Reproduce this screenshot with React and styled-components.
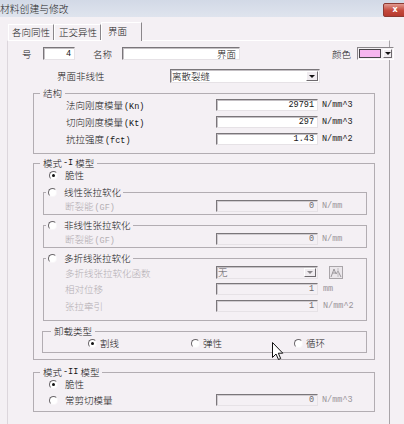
import React from 'react';
import styled, { createGlobalStyle } from 'styled-components';

const GlobalStyle = createGlobalStyle`
  html, body { margin: 0; padding: 0; background: #f4f0f4; }
  body {
    font-family: "Noto Sans CJK SC", "Noto Sans", sans-serif;
    font-size: 9.5px;
    color: #151515;
  }
  #root { width: 404px; height: 424px; overflow: hidden; }
`;

const CJK = `"Noto Sans CJK SC", "Noto Sans", sans-serif`;

const Window = styled.div`
  position: relative;
  width: 404px;
  height: 424px;
  overflow: hidden;
  background: #f4f0f4;
`;

const TitleBar = styled.div`
  height: 17px;
  display: flex;
  align-items: flex-start;
  background: linear-gradient(#d2d9e6, #dfe4ee);
`;

const Title = styled.span`
  font-family: ${CJK};
  font-weight: 300;
  font-size: 9.8px;
  line-height: 18px;
  color: #262626;
`;

const CloseBtn = styled.div`
  margin: 3px -3px 0 auto;
  width: 22px;
  height: 12px;
  border: 1px solid #8c3a33;
  border-radius: 2px;
  background: linear-gradient(#e19a90, #c4483b 55%, #b63a2f);
  color: #fff;
  font-family: "DejaVu Sans", sans-serif;
  font-weight: bold;
  font-size: 8px;
  line-height: 12px;
  text-align: center;
`;

const TabStrip = styled.div`
  height: 23px;
  display: flex;
  align-items: flex-end;
  padding-left: 8px;
`;

const Tab = styled.div`
  height: ${p => (p.active ? 19 : 16)}px;
  box-sizing: border-box;
  padding: ${p => p.pad};
  border-top: 1px solid #ffffff;
  border-left: 1px solid #ffffff;
  border-right: 1px solid #8a868a;
  font-family: ${CJK};
  font-weight: 300;
  font-size: 9.5px;
  line-height: ${p => (p.active ? 17 : 14)}px;
  color: #151515;
  white-space: nowrap;
  margin-bottom: ${p => (p.active ? -1 : 0)}px;
  background: #f4f0f4;
  position: relative;
`;

const Panel = styled.div`
  margin-left: 7px;
  width: 383px;
  height: 384px;
  box-sizing: border-box;
  border-top: 1px solid #ffffff;
  border-left: 1px solid #dcd6dc;
  border-right: 1px solid #a8a4a8;
  padding-top: 6px;
`;

const Row = styled.div`
  display: flex;
  align-items: center;
  height: ${p => p.h || 12}px;
  margin-top: ${p => p.mt || 0}px;
  padding-left: ${p => p.pl || 0}px;
`;

const Label = styled.span`
  flex: none;
  width: ${p => (p.w ? `${p.w}px` : 'auto')};
  margin-left: ${p => p.ml || 0}px;
  font-family: ${CJK};
  font-weight: 300;
  font-size: 9.5px;
  line-height: 12px;
  white-space: nowrap;
  color: ${p => (p.off ? '#b3aeb3' : '#151515')};
`;

const Lat = styled.span`
  font-family: "Liberation Mono", monospace;
  font-weight: normal;
  font-size: 8.5px;
  line-height: 1;
  margin-left: 1px;
`;

const Unit = styled.span`
  margin-left: ${p => p.ml || 4}px;
  font-family: "Liberation Mono", monospace;
  font-size: 8.5px;
  line-height: 12px;
  white-space: nowrap;
  color: ${p => (p.off ? '#9a959a' : '#222')};
`;

const TextBox = styled.div`
  flex: none;
  width: ${p => p.w}px;
  height: ${p => p.h || 12}px;
  margin-left: ${p => p.ml || 0}px;
  box-sizing: border-box;
  display: flex;
  align-items: center;
  justify-content: flex-end;
  padding: 0 3px;
  background: ${p => (p.off ? '#f4f0f4' : '#ffffff')};
  border: 1px solid;
  border-color: #7a767a #e6e2e6 #e6e2e6 #7a767a;
  box-shadow: inset 1px 1px 0 ${p => (p.off ? '#d0ccd0' : '#c4c0c4')};
  font-family: ${p => (p.cjk ? CJK : `"Liberation Mono", monospace`)};
  font-weight: ${p => (p.cjk ? 300 : 'normal')};
  font-size: ${p => (p.cjk ? 9.5 : 8.5)}px;
  line-height: 10px;
  color: ${p => (p.off ? '#6e6a6e' : '#151515')};
  white-space: nowrap;
`;

const Combo = styled.div`
  flex: none;
  width: ${p => p.w}px;
  height: ${p => p.h || 14}px;
  margin-left: ${p => p.ml || 0}px;
  box-sizing: border-box;
  display: flex;
  align-items: stretch;
  background: ${p => (p.off ? '#f4f0f4' : '#ffffff')};
  border: 1px solid;
  border-color: #7a767a #e6e2e6 #e6e2e6 #7a767a;
  box-shadow: inset 1px 1px 0 #c4c0c4;
`;

const ComboText = styled.span`
  flex: 1;
  padding-left: 1px;
  font-family: ${CJK};
  font-weight: 300;
  font-size: 9.5px;
  line-height: ${p => p.lh || 12}px;
  color: ${p => (p.off ? '#555055' : '#151515')};
  white-space: nowrap;
`;

const DropBtn = styled.span`
  flex: none;
  width: ${p => p.w || 12}px;
  box-sizing: border-box;
  margin: 1px 1px 1px 0;
  background: #f0ecf0;
  border: 1px solid;
  border-color: #ffffff #6e6a6e #6e6a6e #ffffff;
  display: flex;
  align-items: center;
  justify-content: center;
  &::after {
    content: '';
    border-left: 3px solid transparent;
    border-right: 3px solid transparent;
    border-top: 3px solid ${p => (p.off ? '#8a868a' : '#111')};
  }
`;

const ColorPick = styled.div`
  flex: none;
  width: 37px;
  height: 13px;
  box-sizing: border-box;
  margin-left: ${p => p.ml || 0}px;
  display: flex;
  border: 1px solid;
  border-color: #8a868a #ffffff #ffffff #8a868a;
  background: #f4f0f4;
`;

const Swatch = styled.span`
  flex: 1;
  margin: 1px 2px 1px 1px;
  background: ${p => p.color};
  border: 1px solid #4a464a;
`;

const Group = styled.fieldset`
  box-sizing: border-box;
  width: ${p => p.w}px;
  margin: ${p => p.mt || 0}px 0 0 ${p => p.ml || 0}px;
  padding: 0;
  border: 1px solid #b2adb2;
  min-inline-size: 0;
`;

const Legend = styled.legend`
  margin-left: ${p => p.ml || 6}px;
  padding: 0 ${p => p.pr || 3}px 0 ${p => p.pl || 3}px;
  line-height: 12px;
  height: 12px;
`;

const LegendInner = styled.span`
  display: inline-flex;
  align-items: center;
  height: 12px;
  font-family: ${CJK};
  font-weight: 300;
  font-size: 9.5px;
  line-height: 12px;
  color: #151515;
  white-space: nowrap;
`;

const GroupBody = styled.div`
  display: flex;
  flex-direction: column;
  gap: ${p => p.gap || 0}px;
  padding: ${p => p.pt || 0}px 0 ${p => p.pb || 0}px ${p => p.pl || 0}px;
`;

const Section = styled.div`
  padding-left: 25px;
`;

const Radio = styled.span`
  flex: none;
  position: relative;
  width: 9px;
  height: 9px;
  box-sizing: border-box;
  border-radius: 50%;
  border: 1px solid;
  border-color: #6a666a #f8f6f8 #f8f6f8 #6a666a;
  background: #ffffff;
  margin-right: ${p => p.gap || 7}px;
  &::after {
    content: '';
    display: ${p => (p.checked ? 'block' : 'none')};
    position: absolute;
    left: 2px;
    top: 2px;
    width: 3px;
    height: 3px;
    border-radius: 50%;
    background: #111;
  }
`;

const RadioItem = styled.span`
  flex: none;
  display: inline-flex;
  align-items: center;
  width: ${p => (p.w ? `${p.w}px` : 'auto')};
  font-family: ${CJK};
  font-weight: 300;
  font-size: 9.5px;
  line-height: 12px;
  white-space: nowrap;
`;

const UnloadRow = styled.div`
  display: grid;
  grid-template-columns: 103px 103px auto;
  height: 12px;
  align-items: center;
  padding-left: 45px;
`;

const IconBtn = styled.span`
  flex: none;
  margin-left: ${p => p.ml || 0}px;
  width: 14px;
  height: 13px;
  display: flex;
`;

const Cursor = styled.svg`
  position: absolute;
  left: 272px;
  top: 342px;
`;

function R({ checked, gap, w, children }) {
  return (
    <RadioItem w={w}>
      <Radio checked={checked} gap={gap} />
      {children}
    </RadioItem>
  );
}

export default function App() {
  return (
    <Window>
      <GlobalStyle />
      <TitleBar>
        <Title>材料创建与修改</Title>
        <CloseBtn>x</CloseBtn>
      </TitleBar>

      <TabStrip>
        <Tab pad="0 3px 0 3px">各向同性</Tab>
        <Tab pad="0 3px 0 4px">正交异性</Tab>
        <Tab active pad="0 14px 0 6px">界面</Tab>
      </TabStrip>

      <Panel>
        <Row h={13} pl={14}>
          <Label w={21}>号</Label>
          <TextBox w={32} h={13}>4</TextBox>
          <Label ml={18} w={29}>名称</Label>
          <TextBox w={118} h={13} cjk>界面</TextBox>
          <Label ml={92} w={25}>颜色</Label>
          <ColorPick>
            <Swatch color="#f6b6ef" />
            <DropBtn w={9} />
          </ColorPick>
        </Row>

        <Row h={14} mt={9} pl={49}>
          <Label w={113}>界面非线性</Label>
          <Combo w={150}>
            <ComboText>离散裂缝</ComboText>
            <DropBtn />
          </Combo>
        </Row>

        <Section>
          <Group w={342} mt={4}>
            <Legend ml={6}>
              <LegendInner>结构</LegendInner>
            </Legend>
            <GroupBody gap={5} pb={8} pl={32}>
              <Row>
                <Label w={150}>法向刚度模量<Lat>(Kn)</Lat></Label>
                <TextBox w={102}>29791</TextBox>
                <Unit>N/mm^3</Unit>
              </Row>
              <Row>
                <Label w={150}>切向刚度模量<Lat>(Kt)</Lat></Label>
                <TextBox w={102}>297</TextBox>
                <Unit>N/mm^3</Unit>
              </Row>
              <Row>
                <Label w={150}>抗拉强度<Lat>(fct)</Lat></Label>
                <TextBox w={102}>1.43</TextBox>
                <Unit>N/mm^2</Unit>
              </Row>
            </GroupBody>
          </Group>

          <Group w={342} mt={3}>
            <Legend ml={6}>
              <LegendInner>模式<Lat>-I</Lat>&nbsp;模型</LegendInner>
            </Legend>
            <GroupBody pb={6}>
              <Row pl={15}>
                <R checked>脆性</R>
              </Row>

              <Group w={324} mt={5} ml={9}>
                <Legend ml={2} pl={2} pr={2}>
                  <LegendInner>
                    <Radio />
                    线性张拉软化
                  </LegendInner>
                </Legend>
                <GroupBody pt={2} pb={2} pl={21}>
                  <Row>
                    <Label w={151} off>断裂能<Lat>(GF)</Lat></Label>
                    <TextBox w={102} off>0</TextBox>
                    <Unit off>N/mm</Unit>
                  </Row>
                </GroupBody>
              </Group>

              <Group w={324} mt={4} ml={9}>
                <Legend ml={2} pl={2} pr={2}>
                  <LegendInner>
                    <Radio />
                    非线性张拉软化
                  </LegendInner>
                </Legend>
                <GroupBody pt={2} pb={2} pl={21}>
                  <Row>
                    <Label w={151} off>断裂能<Lat>(GF)</Lat></Label>
                    <TextBox w={102} off>0</TextBox>
                    <Unit off>N/mm</Unit>
                  </Row>
                </GroupBody>
              </Group>

              <Group w={324} mt={4} ml={9}>
                <Legend ml={2} pl={2} pr={2}>
                  <LegendInner>
                    <Radio />
                    多折线张拉软化
                  </LegendInner>
                </Legend>
                <GroupBody pt={2} pb={8} pl={21} gap={4}>
                  <Row h={13}>
                    <Label w={151} off>多折线张拉软化函数</Label>
                    <Combo w={102} h={13} off>
                      <ComboText off lh={11}>无</ComboText>
                      <DropBtn off />
                    </Combo>
                    <IconBtn ml={11}>
                      <svg width="14" height="13" viewBox="0 0 14 13">
                        <rect x="0.5" y="0.5" width="13" height="12" fill="#ebe7eb" stroke="#a9a5a9" />
                        <path d="M2 11 L5 3 L7 8 L9 5 L12 11" fill="none" stroke="#9a969a" strokeWidth="1" />
                        <path d="M3.5 7 H6" stroke="#9a969a" strokeWidth="1" />
                        <path d="M9 2 V11" stroke="#c0bcc0" strokeWidth="1" />
                      </svg>
                    </IconBtn>
                  </Row>
                  <Row>
                    <Label w={151} off>相对位移</Label>
                    <TextBox w={102} off>1</TextBox>
                    <Unit off ml={5}>mm</Unit>
                  </Row>
                  <Row mt={1}>
                    <Label w={151} off>张拉牵引</Label>
                    <TextBox w={102} off>1</TextBox>
                    <Unit off ml={5}>N/mm^2</Unit>
                  </Row>
                </GroupBody>
              </Group>

              <Group w={325} mt={4} ml={8}>
                <Legend ml={8}>
                  <LegendInner>卸载类型</LegendInner>
                </Legend>
                <GroupBody pb={3}>
                  <UnloadRow>
                    <R checked gap={3}>割线</R>
                    <R gap={3}>弹性</R>
                    <R gap={3}>循环</R>
                  </UnloadRow>
                </GroupBody>
              </Group>
            </GroupBody>
          </Group>

          <Group w={342} mt={6}>
            <Legend ml={6}>
              <LegendInner>模式<Lat>-II</Lat>&nbsp;模型</LegendInner>
            </Legend>
            <GroupBody gap={4} pb={5}>
              <Row pl={15}>
                <R checked>脆性</R>
              </Row>
              <Row pl={15}>
                <R w={167}>常剪切模量</R>
                <TextBox w={102} off>0</TextBox>
                <Unit off>N/mm^3</Unit>
              </Row>
            </GroupBody>
          </Group>
        </Section>
      </Panel>

      <Cursor width="12" height="19" viewBox="0 0 12 19">
        <path d="M0.5 0.5 V15.5 L4 12 L6.5 17.5 L8.7 16.5 L6.3 11.2 H10.8 Z" fill="#ffffff" stroke="#111" strokeWidth="1" />
      </Cursor>
    </Window>
  );
}
